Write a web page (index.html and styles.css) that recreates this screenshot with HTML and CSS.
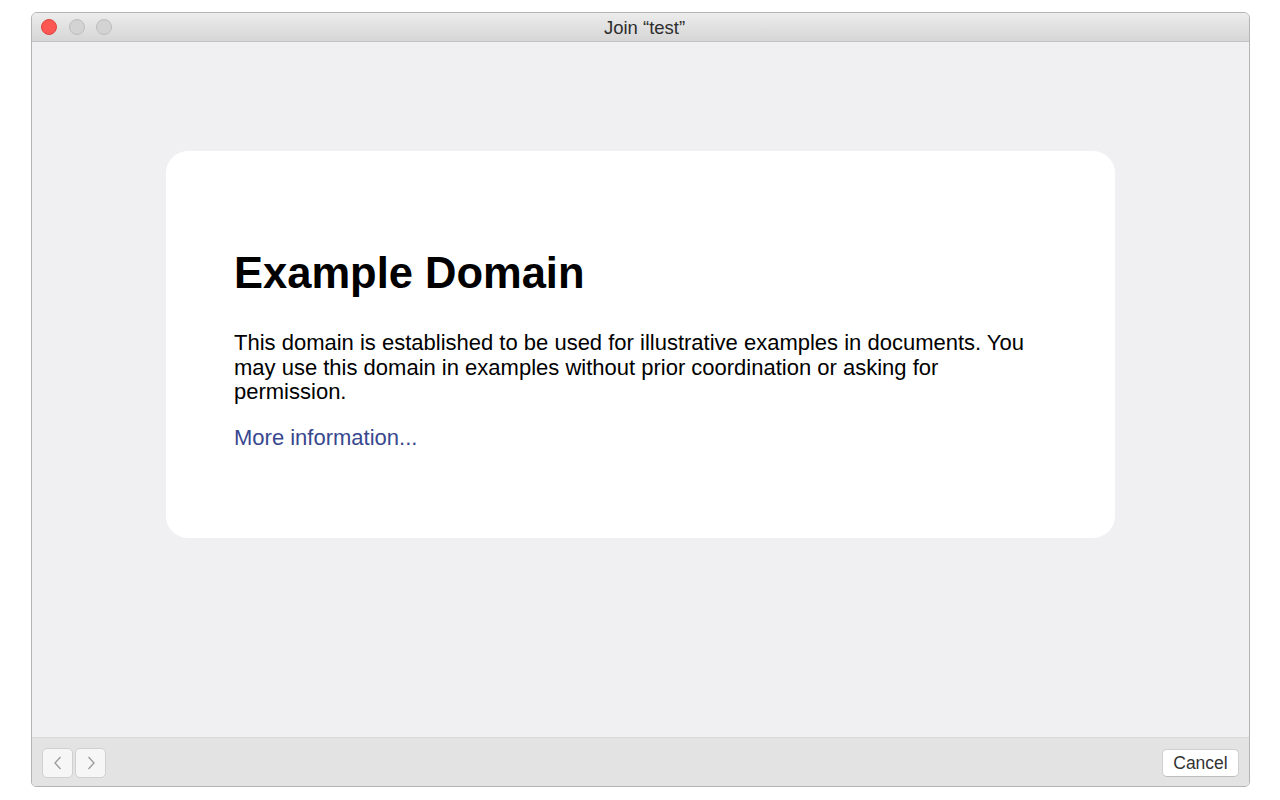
FILE: index.html
```html
<!DOCTYPE html>
<html>
<head>
<meta charset="utf-8">
<link rel="stylesheet" href="styles.css">
</head>
<body>
<div class="window">
  <div class="titlebar">
    <div class="lights">
      <span class="light close"></span>
      <span class="light off"></span>
      <span class="light off"></span>
    </div>
    <div class="title">Join “test”</div>
  </div>
  <div class="content">
    <div class="card">
      <h1>Example Domain</h1>
      <p>This domain is established to be used for illustrative examples in documents. You may use this domain in examples without prior coordination or asking for permission.</p>
      <p class="more"><a href="#">More information...</a></p>
    </div>
  </div>
  <div class="toolbar">
    <div class="nav">
      <button class="navbtn" aria-label="Back"><svg width="10" height="16" viewBox="0 0 10 16"><path d="M7.5 2 L2 8 L7.5 14" fill="none" stroke="#9a9a9a" stroke-width="1.3"/></svg></button>
      <button class="navbtn" aria-label="Forward"><svg width="10" height="16" viewBox="0 0 10 16"><path d="M2.5 2 L8 8 L2.5 14" fill="none" stroke="#9a9a9a" stroke-width="1.3"/></svg></button>
    </div>
    <button class="cancel">Cancel</button>
  </div>
</div>
</body>
</html>
```

FILE: styles.css
```css
html, body {
  margin: 0;
  padding: 0;
  background: #ffffff;
  font-family: "Liberation Sans", Arial, sans-serif;
}
.window {
  margin: 12px 0 0 31px;
  width: 1219px;
  height: 775px;
  box-sizing: border-box;
  border: 1px solid #b4b4b4;
  border-radius: 6px 6px 5px 5px;
  overflow: hidden;
  display: flex;
  flex-direction: column;
  background: #f0f0f2;
}
.titlebar {
  height: 28px;
  flex: none;
  background: linear-gradient(#ececec, #d6d6d6);
  border-bottom: 1px solid #c2c2c2;
  display: flex;
  align-items: center;
  position: relative;
}
.lights {
  display: flex;
  gap: 11.5px;
  padding-left: 9px;
}
.light {
  width: 16px;
  height: 16px;
  border-radius: 50%;
  box-sizing: border-box;
}
.light.close {
  background: #fc5753;
  border: 1px solid #e0443f;
}
.light.off {
  background: #d3d3d3;
  border: 1px solid #bdbdbd;
}
.title {
  position: absolute;
  left: 0;
  right: 0;
  top: 0;
  bottom: 0;
  display: flex;
  align-items: center;
  justify-content: center;
  padding-left: 8px;
  padding-top: 1px;
  font-size: 18.5px;
  color: #2e2e2e;
  pointer-events: none;
}
.content {
  flex: 1;
  padding: 109px 134px 0;
}
.card {
  background: #ffffff;
  border-radius: 22px;
  padding: 97px 68px 0;
  height: 387px;
  box-sizing: border-box;
}
h1 {
  margin: 0 0 33px;
  font-size: 43.5px;
  line-height: 50px;
  font-weight: bold;
  color: #000;
}
p {
  margin: 0;
  font-size: 22px;
  line-height: 24.5px;
  color: #000;
}
p.more {
  margin-top: 21.5px;
}
a {
  color: #38488f;
  text-decoration: none;
}
.toolbar {
  height: 48px;
  flex: none;
  background: #e3e3e3;
  border-top: 1px solid #dadada;
  display: flex;
  align-items: center;
  justify-content: space-between;
  padding: 0 10px 0 10px;
}
.nav {
  display: flex;
  gap: 2px;
  padding-top: 1px;
}
.navbtn {
  width: 31px;
  height: 30px;
  background: #f6f6f6;
  border: 1px solid #d0d0d0;
  border-radius: 5px;
  display: flex;
  align-items: center;
  justify-content: center;
  padding: 0;
}
.cancel {
  width: 77px;
  height: 28px;
  background: #ffffff;
  border: 1px solid #cfcfcf;
  border-bottom-color: #bdbdbd;
  border-radius: 5px;
  font-family: "Liberation Sans", Arial, sans-serif;
  font-size: 17.5px;
  color: #333333;
  padding: 0;
  margin-top: 2px;
}
```
